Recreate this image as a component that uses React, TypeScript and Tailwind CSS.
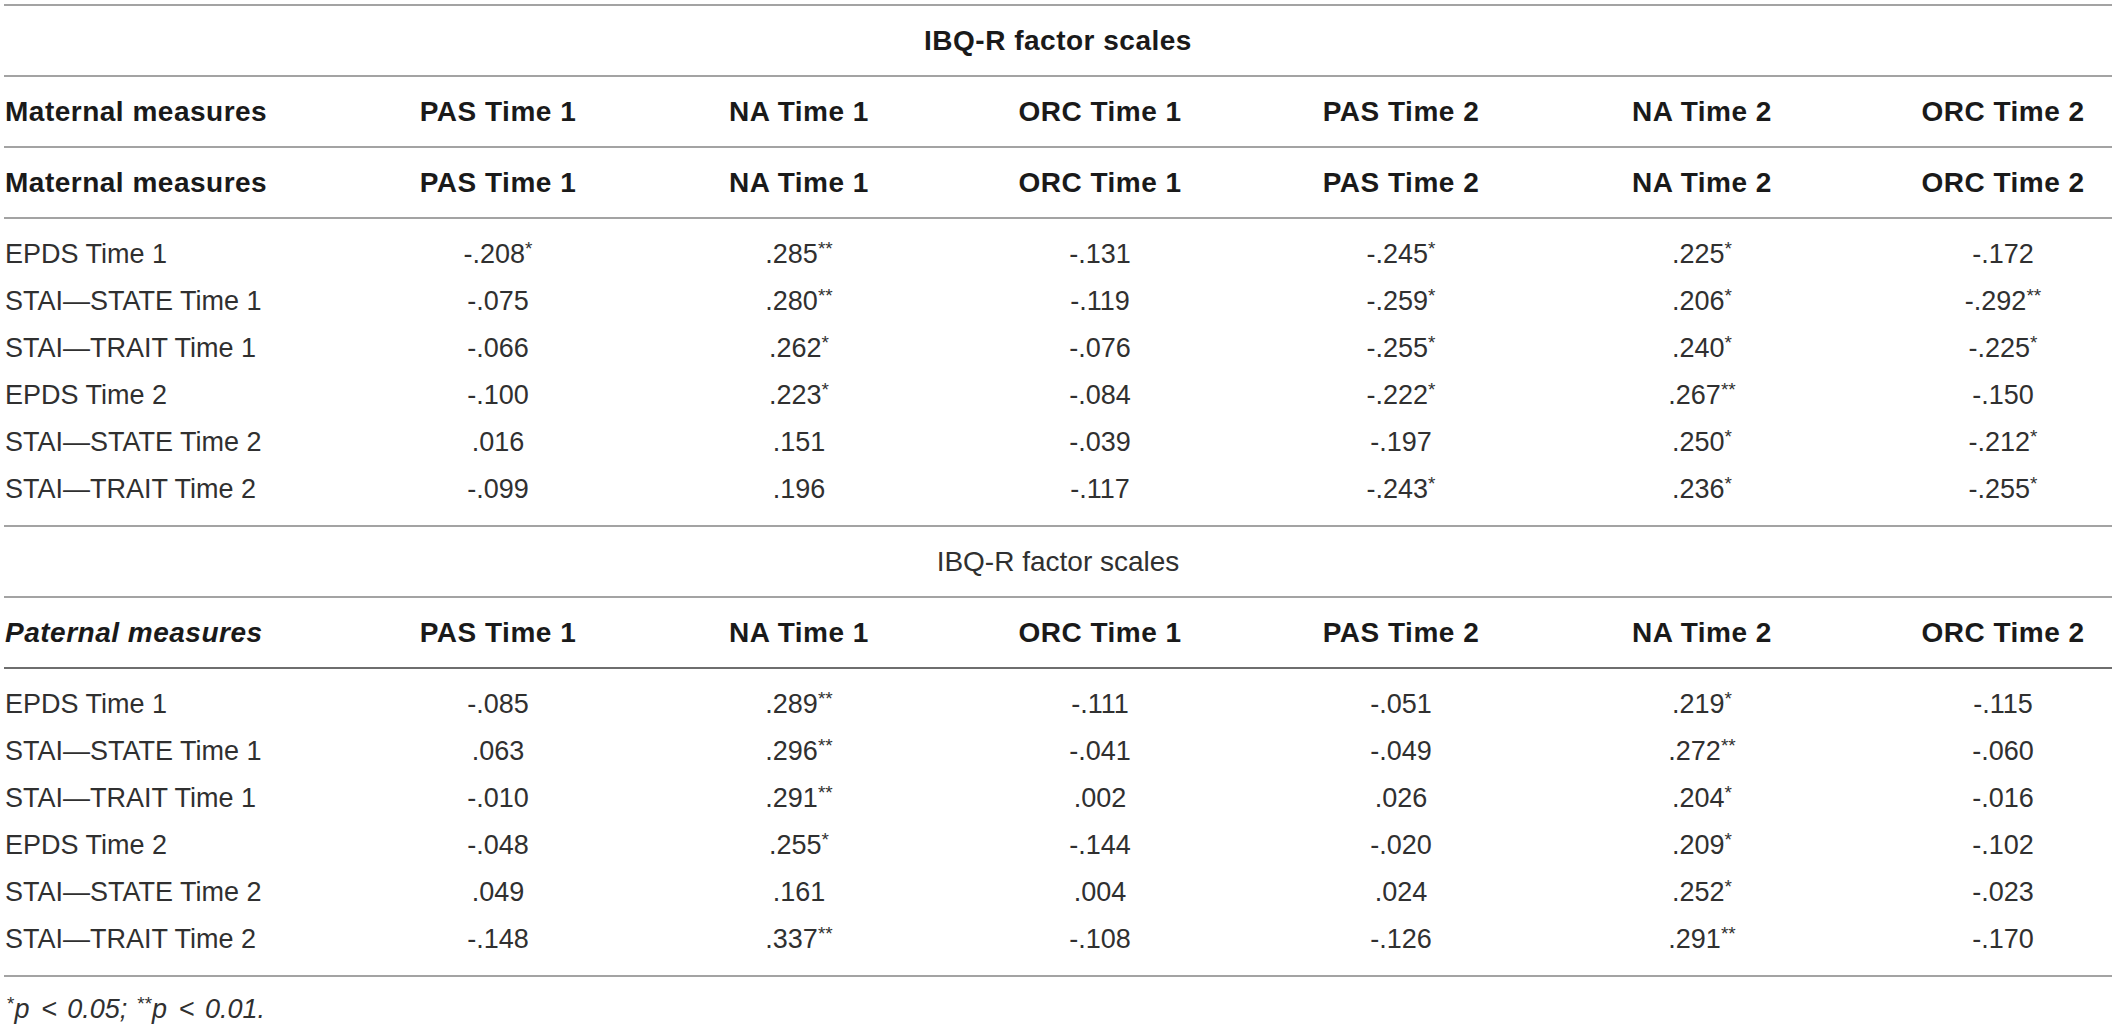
import React from "react";

const cols = ["PAS Time 1", "NA Time 1", "ORC Time 1", "PAS Time 2", "NA Time 2", "ORC Time 2"];

const maternal: [string, string[]][] = [
  ["EPDS Time 1", ["-.208*", ".285**", "-.131", "-.245*", ".225*", "-.172"]],
  ["STAI\u2014STATE Time 1", ["-.075", ".280**", "-.119", "-.259*", ".206*", "-.292**"]],
  ["STAI\u2014TRAIT Time 1", ["-.066", ".262*", "-.076", "-.255*", ".240*", "-.225*"]],
  ["EPDS Time 2", ["-.100", ".223*", "-.084", "-.222*", ".267**", "-.150"]],
  ["STAI\u2014STATE Time 2", [".016", ".151", "-.039", "-.197", ".250*", "-.212*"]],
  ["STAI\u2014TRAIT Time 2", ["-.099", ".196", "-.117", "-.243*", ".236*", "-.255*"]],
];

const paternal: [string, string[]][] = [
  ["EPDS Time 1", ["-.085", ".289**", "-.111", "-.051", ".219*", "-.115"]],
  ["STAI\u2014STATE Time 1", [".063", ".296**", "-.041", "-.049", ".272**", "-.060"]],
  ["STAI\u2014TRAIT Time 1", ["-.010", ".291**", ".002", ".026", ".204*", "-.016"]],
  ["EPDS Time 2", ["-.048", ".255*", "-.144", "-.020", ".209*", "-.102"]],
  ["STAI\u2014STATE Time 2", [".049", ".161", ".004", ".024", ".252*", "-.023"]],
  ["STAI\u2014TRAIT Time 2", ["-.148", ".337**", "-.108", "-.126", ".291**", "-.170"]],
];

const GRID = "grid grid-cols-[303px_repeat(6,220px)] gap-x-[81px]";

const font = { fontFamily: "'Liberation Sans', Arial, Helvetica, sans-serif" };

function Val({ v }: { v: string }) {
  const m = v.match(/^([^*]*)(\**)$/);
  const num = m ? m[1] : v;
  const stars = m ? m[2] : "";
  return (
    <span>
      {num}
      {stars && <sup className="text-[19px] top-[-0.45em]">{stars}</sup>}
    </span>
  );
}

function HeaderRow({ label, italic, dark }: { label: string; italic?: boolean; dark?: boolean }) {
  return (
    <div
      className={`${GRID} h-[71px] items-center border-b-2 ${dark ? "border-[#6e6e6e]" : "border-[#a3a3a3]"} text-[28px] font-bold tracking-[0.5px] text-[#1a1a1a]`}
      style={font}
    >
      <div className={`pl-[1px] whitespace-nowrap ${italic ? "italic" : ""}`}>{label}</div>
      {cols.map((c) => (
        <div key={c} className="text-center whitespace-nowrap">
          {c}
        </div>
      ))}
    </div>
  );
}

function Body({ rows }: { rows: [string, string[]][] }) {
  return (
    <div className="border-b-2 border-[#a3a3a3] py-[12px] text-[27px] text-[#303030]" style={font}>
      {rows.map(([label, vals]) => (
        <div key={label} className={`${GRID} h-[47px] items-center`}>
          <div className="pl-[1px] whitespace-nowrap">{label}</div>
          {vals.map((v, i) => (
            <div key={i} className="text-center whitespace-nowrap">
              <Val v={v} />
            </div>
          ))}
        </div>
      ))}
    </div>
  );
}

function Lt() {
  return <span className="inline-block ml-[12px] mr-[10px] not-italic">{"<"}</span>;
}

export default function App() {
  return (
    <div className="w-[2117px] h-[1026px] bg-white overflow-hidden">
      <div className="ml-[4px] mt-[4px] w-[2108px]">
        <div className="border-t-2 border-[#a3a3a3]" />
        <div
          className="h-[71px] flex items-center justify-center border-b-2 border-[#a3a3a3] text-[28px] font-bold tracking-[0.5px] text-[#1a1a1a]"
          style={font}
        >
          IBQ-R factor scales
        </div>
        <HeaderRow label="Maternal measures" />
        <HeaderRow label="Maternal measures" />
        <Body rows={maternal} />
        <div
          className="h-[71px] flex items-center justify-center border-b-2 border-[#a3a3a3] text-[28px] text-[#303030]"
          style={font}
        >
          IBQ-R factor scales
        </div>
        <HeaderRow label="Paternal measures" italic dark />
        <Body rows={paternal} />
        <div className="pt-[12px] pl-[3px] text-[27px] italic text-[#303030] whitespace-nowrap" style={font}>
          <sup className="text-[19px] not-italic top-[-0.4em]">*</sup>p<Lt />0.05;
          <span className="inline-block w-[10px]" />
          <sup className="text-[19px] not-italic top-[-0.4em]">**</sup>p<Lt />0.01.
        </div>
      </div>
    </div>
  );
}
